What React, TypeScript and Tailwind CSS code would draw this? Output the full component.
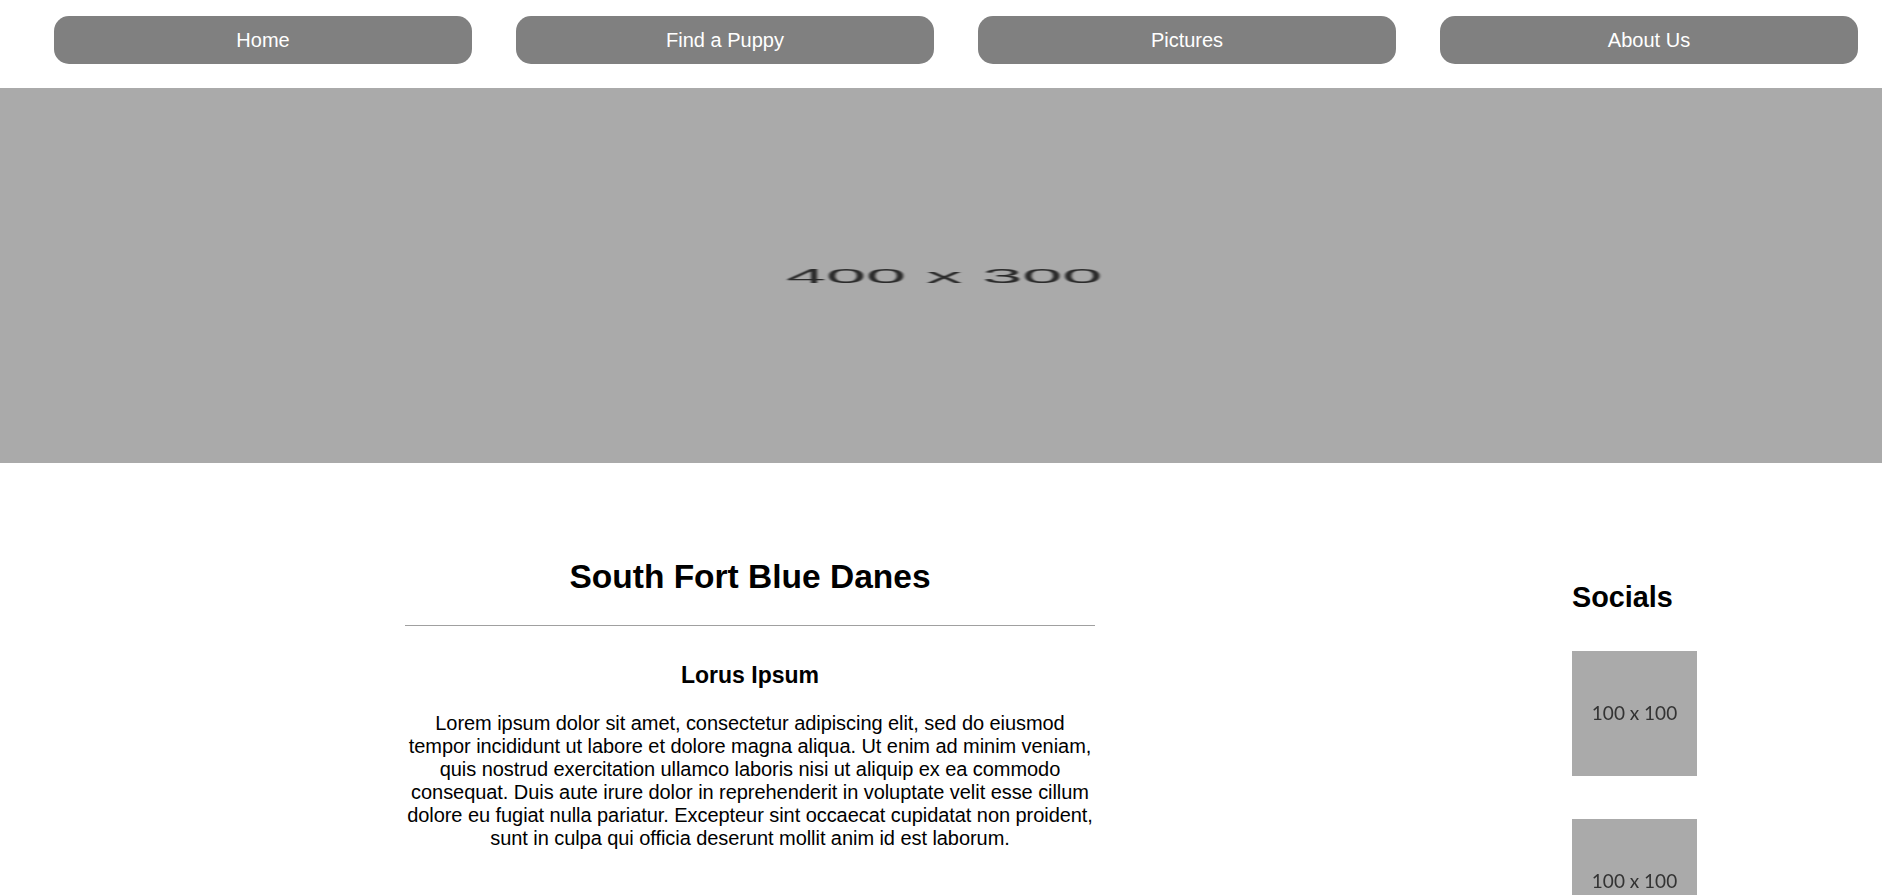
const links = ["Home", "Find a Puppy", "Pictures", "About Us"];

const Placeholder = () => (
  <div className="flex h-[125px] w-[125px] items-center justify-center bg-[#aaaaaa]">
    <span className="font-['Lato',sans-serif] text-[19px] text-[#333333] blur-[0.3px]">
      100 x 100
    </span>
  </div>
);

const App = () => {
  return (
    <div className="min-h-screen bg-white font-['Liberation_Sans',Arial,sans-serif] text-black">
      <nav className="flex h-[88px] gap-[44px] pl-[54px] pr-[24px] pt-[16px]">
        {links.map((link) => (
          <a
            key={link}
            href="#"
            className="flex h-[48px] flex-1 items-center justify-center rounded-[15px] bg-[#808080] text-[20px] text-white"
          >
            {link}
          </a>
        ))}
      </nav>

      <div className="flex h-[375px] items-center justify-center overflow-hidden bg-[#aaaaaa]">
        <span className="ml-[6px] inline-block scale-x-[4.5] scale-y-[1.3] text-[16px] leading-none text-[#2a2a2a] blur-[0.4px]">
          400 x 300
        </span>
      </div>

      <div className="flex">
        <main className="ml-[405px] w-[690px] pt-[95px] text-center">
          <h1 className="text-[33.5px] font-bold leading-[38px]">
            South Fort Blue Danes
          </h1>
          <hr className="mt-[29px] border-[#a0a0a0]" />
          <h3 className="mt-[36px] text-[23px] font-bold leading-[26px]">
            Lorus Ipsum
          </h3>
          <p className="mt-[24px] text-[20px] leading-[23px] tracking-[-0.06px]">
            Lorem ipsum dolor sit amet, consectetur adipiscing elit, sed do
            eiusmod tempor incididunt ut labore et dolore magna aliqua. Ut enim
            ad minim veniam, quis nostrud exercitation ullamco laboris nisi ut
            aliquip ex ea commodo consequat. Duis aute irure dolor in
            reprehenderit in voluptate velit esse cillum dolore eu fugiat nulla
            pariatur. Excepteur sint occaecat cupidatat non proident, sunt in
            culpa qui officia deserunt mollit anim id est laborum.
          </p>
        </main>

        <aside className="ml-[477px] pt-[118px]">
          <h2 className="text-[28.8px] font-bold leading-[33px]">Socials</h2>
          <div className="mt-[37px] flex flex-col gap-[43px]">
            <Placeholder />
            <Placeholder />
          </div>
        </aside>
      </div>
    </div>
  );
};

export default App;
